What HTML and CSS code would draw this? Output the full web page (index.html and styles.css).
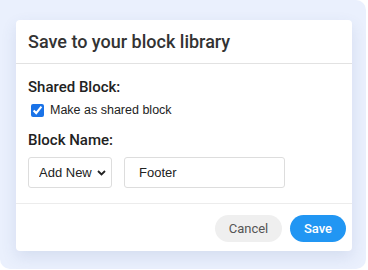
FILE: index.html
```html
<!DOCTYPE html>
<html lang="en">
<head>
    <meta charset="UTF-8">
    <meta name="viewport" content="width=device-width, initial-scale=1.0">
    <title>Save to your block library</title>
    <link rel="stylesheet" href="styles.css">
</head>
<body>
    <div class="backdrop">
        <div class="dialog">
            <div class="dialog-header">
                <h2>Save to your block library</h2>
            </div>
            <div class="dialog-body">
                <h4>Shared Block:</h4>
                <label class="check-row">
                    <input type="checkbox" checked> Make as shared block
                </label>
                <h4>Block Name:</h4>
                <div class="name-row">
                    <div class="select-wrap">
                        <select>
                            <option>Add New</option>
                        </select>
                        <svg class="chevron" width="9" height="6" viewBox="0 0 9 6">
                            <path d="M1 1l3.5 3.5L8 1" fill="none" stroke="#222" stroke-width="1.8"/>
                        </svg>
                    </div>
                    <input type="text" value="Footer">
                </div>
            </div>
            <div class="dialog-footer">
                <button class="btn btn-cancel">Cancel</button>
                <button class="btn btn-save">Save</button>
            </div>
        </div>
    </div>
</body>
</html>
```
FILE: styles.css
```css
/* General Styles */
body {
    margin: 0;
    background: #fff;
    font-family: Roboto, "Liberation Sans", sans-serif;
    color: #333;
}

.backdrop {
    width: 366px;
    height: 269px;
    box-sizing: border-box;
    padding: 20px 14px 0 16px;
    background: #eaf0fd;
    border-radius: 0 10px 10px 10px;
}

/* Dialog */
.dialog {
    background: #fff;
    border-radius: 4px;
    box-shadow: 0 6px 16px rgba(60, 80, 140, 0.12);
}

.dialog-header {
    padding: 0 12px;
    height: 43px;
    display: flex;
    align-items: center;
    border-bottom: 1px solid #e2e2e2;
}

.dialog-header h2 {
    margin: 0;
    font-size: 18px;
    font-weight: 500;
    color: #333;
}

.dialog-body {
    padding: 14px 12px 15px;
    border-bottom: 1px solid #ececec;
}

.dialog-body h4 {
    margin: 0;
    font-size: 15px;
    font-weight: 500;
    color: #222;
}

.check-row {
    display: flex;
    align-items: center;
    gap: 6px;
    margin: 7px 0 14px;
    font-family: "Liberation Sans", Arial, sans-serif;
    font-size: 12.5px;
    color: #222;
}

.check-row input {
    margin: 0 0 0 3px;
    width: 13px;
    height: 13px;
    accent-color: #1a73e8;
}

.name-row {
    display: flex;
    gap: 12px;
    margin-top: 8px;
}

.select-wrap {
    position: relative;
}

.chevron {
    position: absolute;
    right: 6px;
    top: 13px;
    pointer-events: none;
}

.name-row select,
.name-row input {
    height: 31px;
    box-sizing: border-box;
    border: 1px solid #ddd;
    border-radius: 3px;
    background: #fff;
    font-family: "Liberation Sans", Arial, sans-serif;
    font-size: 13px;
    color: #222;
}

.name-row select {
    width: 84px;
    padding: 0 10px;
    appearance: none;
    -webkit-appearance: none;
}

.name-row input {
    width: 161px;
    padding: 0 14px;
}

/* Footer */
.dialog-footer {
    display: flex;
    justify-content: flex-end;
    gap: 8px;
    padding: 11px 6px 9px;
}

.btn {
    height: 27px;
    border: none;
    border-radius: 14px;
    font-family: Roboto, sans-serif;
    font-size: 13px;
    cursor: pointer;
}

.btn-cancel {
    width: 67px;
    background: #efefef;
    color: #555;
}

.btn-save {
    width: 56px;
    background: #2196f3;
    color: #fff;
    font-weight: 500;
}
```
